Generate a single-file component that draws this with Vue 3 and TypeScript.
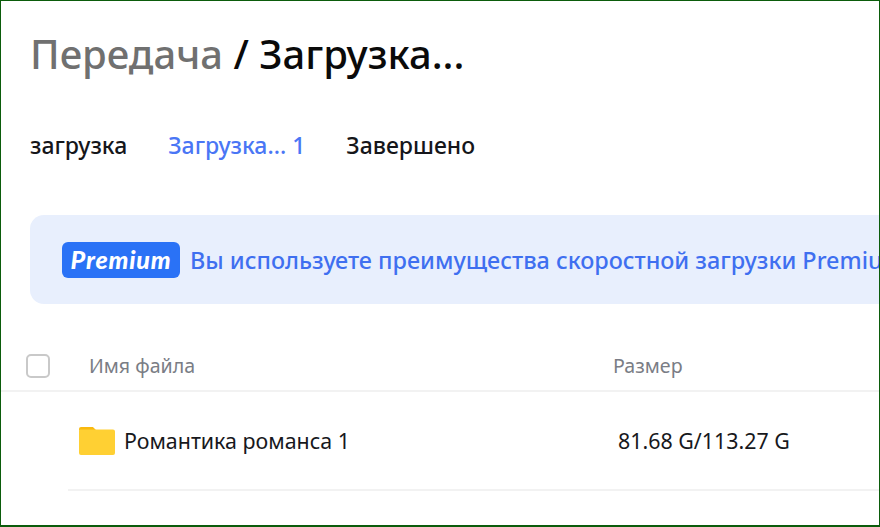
<script setup lang="ts">
const tabs: { label: string; active?: boolean }[] = [
  { label: 'загрузка' },
  { label: 'Загрузка... 1', active: true },
  { label: 'Завершено' },
]
</script>

<template>
  <div class="frame">
    <h1 class="title"><span class="crumb">Передача</span> / Загрузка...</h1>
    <nav class="tabs">
      <span v-for="t in tabs" :key="t.label" class="tab" :class="{ active: t.active }">{{ t.label }}</span>
    </nav>
    <div class="banner">
      <span class="badge">Premium</span>
      <span class="note">Вы используете преимущества скоростной загрузки Premium</span>
    </div>
    <div class="head">
      <span class="check"></span>
      <span class="col-name">Имя файла</span>
      <span class="col-size">Размер</span>
    </div>
    <div class="row">
      <svg class="folder" width="36" height="30" viewBox="0 0 36 30">
        <path d="M0 3a2 2 0 0 1 2-2h11c1 0 1.500.5 2.200 1.300L17 4H0z" fill="#f9b90f" />
        <path d="M0 4.500a1 1 0 0 1 1-1h33a2 2 0 0 1 2 2V27a2 2 0 0 1-2 2H2a2 2 0 0 1-2-2z" fill="#ffd033" />
      </svg>
      <span class="file">Романтика романса 1</span>
      <span class="size">81.68 G/113.27 G</span>
    </div>
  </div>
</template>

<style>
html, body { margin: 0; background: #fff; }
</style>

<style scoped>
.frame {
  box-sizing: border-box;
  width: 880px;
  height: 527px;
  border: 1px solid #0b5c0b;
  border-bottom-width: 2px;
  overflow: hidden;
  font-family: "Noto Sans", "Open Sans", sans-serif;
  color: #0a0a0a;
  padding: 29px 0 0 29px;
}
.title {
  margin: 0;
  font-size: 40px;
  line-height: 48px;
  font-weight: 500;
  white-space: nowrap;
}
.crumb { color: #707070; }
.tabs {
  display: flex;
  gap: 41px;
  margin-top: 52px;
  font-size: 23px;
  line-height: 30px;
  font-weight: 500;
}
.tab { color: #15161a; }
.tab.active { color: #4a76f5; }
.banner {
  display: flex;
  align-items: center;
  gap: 10px;
  width: 1000px;
  height: 89px;
  margin-top: 55px;
  padding-left: 32px;
  box-sizing: border-box;
  background: #e8effd;
  border-radius: 14px;
  white-space: nowrap;
}
.badge {
  display: block;
  flex: none;
  width: 118px;
  height: 36px;
  box-sizing: border-box;
  background: #2a72f6;
  border-radius: 6px;
  color: #fff;
  font: italic 900 25px/35px Lato, "Noto Sans", sans-serif;
  letter-spacing: 0.800px;
  text-align: center;
}
.note {
  color: #3f6ff0;
  font-size: 23.400px;
  font-weight: 500;
}
.head {
  display: flex;
  align-items: center;
  height: 88px;
  margin-left: -29px;
  border-bottom: 2px solid #f2f2f2;
  box-sizing: border-box;
  color: #7a7d85;
  font-size: 19.600px;
  padding-left: 25px;
  padding-top: 37px;
  width: 880px;
}
.check {
  flex: none;
  width: 20px;
  height: 20px;
  border: 2px solid #c9c9c9;
  border-radius: 5px;
  background: #fff;
}
.col-name { margin-left: 39px; width: 524px; }
.row {
  display: flex;
  align-items: center;
  height: 99px;
  margin-left: 38px;
  border-bottom: 2px solid #f2f2f2;
  box-sizing: border-box;
  padding-left: 11px;
  font-size: 21.400px;
  color: #17181c;
}
.folder { flex: none; }
.file { margin-left: 9px; width: 494px; }
</style>
